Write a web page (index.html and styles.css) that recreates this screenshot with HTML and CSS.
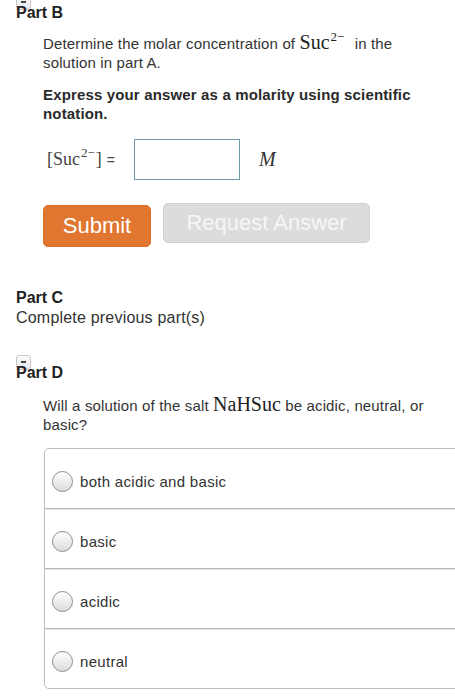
FILE: index.html
```html
<!DOCTYPE html>
<html>
<head>
<meta charset="utf-8">
<link rel="stylesheet" href="styles.css">
</head>
<body>
<main class="page">
  <section class="part">
    <div class="part-head">
      <span class="toggle"></span>
      <h2 class="part-title">Part B</h2>
    </div>
    <div class="part-body">
      <p class="question">Determine the molar concentration of <span class="math">Suc<sup>2−</sup></span> in the solution in part A.</p>
      <p class="instr">Express your answer as a molarity using scientific notation.</p>
      <div class="answer-row">
        <span class="label"><span class="math">[Suc<sup>2−</sup>]</span> <span class="eq">=</span></span>
        <input class="answer-input" type="text">
        <span class="unit">M</span>
      </div>
      <div class="buttons">
        <button class="btn btn-submit">Submit</button>
        <button class="btn btn-request">Request Answer</button>
      </div>
    </div>
  </section>

  <section class="part part-c">
    <h2 class="part-title">Part C</h2>
    <p class="locked">Complete previous part(s)</p>
  </section>

  <section class="part part-d">
    <div class="part-head">
      <span class="toggle"></span>
      <h2 class="part-title">Part D</h2>
    </div>
    <div class="part-body">
      <p class="question">Will a solution of the salt <span class="math">NaHSuc</span> be acidic, neutral, or basic?</p>
      <ul class="choices">
        <li class="choice"><span class="radio"></span><span>both acidic and basic</span></li>
        <li class="choice"><span class="radio"></span><span>basic</span></li>
        <li class="choice"><span class="radio"></span><span>acidic</span></li>
        <li class="choice"><span class="radio"></span><span>neutral</span></li>
      </ul>
    </div>
  </section>
</main>
</body>
</html>
```

FILE: styles.css
```css
html, body {
  margin: 0;
  padding: 0;
  background: #fff;
  overflow: hidden;
}
body {
  font-family: "Liberation Sans", Arial, sans-serif;
  color: #333;
  width: 455px;
}
.page {
  padding-top: 3px;
}
.part-head {
  position: relative;
}
.toggle {
  position: absolute;
  left: 16px;
  top: -8px;
  width: 13px;
  height: 13px;
  border: 1px solid #c9c9c9;
  border-radius: 3px;
  background: linear-gradient(#fafafa, #e8e8e8);
}
.toggle::after {
  content: "";
  position: absolute;
  left: 4px;
  top: 5px;
  width: 5px;
  height: 2px;
  background: #444;
}
.part-title {
  position: relative;
  margin: 0;
  padding-left: 16px;
  font-size: 16px;
  line-height: 20px;
  font-weight: bold;
  color: #222;
}
.part-body {
  padding-left: 43px;
}
.question, .instr {
  margin: 11px 0 0;
  font-size: 15px;
  line-height: 19px;
  letter-spacing: 0.15px;
  padding-right: 14px;
}
.instr {
  margin-top: 13px;
  font-weight: bold;
  letter-spacing: 0.15px;
  color: #2a2a2a;
}
.math {
  font-family: "Liberation Serif", "Times New Roman", serif;
  font-size: 20px;
  line-height: 16px;
  letter-spacing: 0;
  color: #222;
}
.math sup {
  font-size: 13px;
  line-height: 0;
  vertical-align: 8px;
  margin-left: 1px;
  margin-right: 6px;
}
.label .math sup {
  margin-right: 1px;
}
.answer-row {
  display: flex;
  align-items: center;
  margin-top: 16px;
  padding-left: 4px;
}
.label {
  font-size: 14px;
  display: inline-flex;
  align-items: baseline;
}
.label .math {
  font-size: 18px;
  color: #444;
}
.eq {
  margin-left: 5px;
  color: #444;
}
.answer-input {
  box-sizing: border-box;
  width: 106px;
  height: 41px;
  margin: 0 0 0 19px;
  border: 1px solid #6f98ab;
  border-radius: 0;
  padding: 0;
  background: #fff;
  outline: none;
}
.unit {
  margin-left: 19px;
  font-family: "Liberation Serif", "Times New Roman", serif;
  font-style: italic;
  font-size: 20px;
  color: #333;
}
.buttons {
  display: flex;
  align-items: flex-start;
  gap: 12px;
  margin-top: 23px;
}
.btn {
  box-sizing: border-box;
  font-family: "Liberation Sans", Arial, sans-serif;
  font-size: 22px;
  border-radius: 5px;
  padding: 0;
  cursor: pointer;
}
.btn-submit {
  margin-top: 2px;
  width: 108px;
  height: 42px;
  background: #e0762f;
  border: 1px solid #d96d23;
  color: #fff;
}
.btn-request {
  width: 207px;
  height: 40px;
  background: #dcdcdc;
  border: 1px solid #d0d0d0;
  color: #f6f6f6;
}
.part-c {
  margin-top: 41px;
}
.locked {
  margin: 0;
  padding-left: 16px;
  font-size: 16px;
  line-height: 20px;
  letter-spacing: 0.2px;
  color: #333;
}
.part-d {
  margin-top: 35px;
}
.part-d .question {
  margin-top: 13px;
}
.choices {
  list-style: none;
  margin: 14px -12px 0 1px;
  padding: 0;
  border: 1px solid #bdbdbd;
  border-radius: 5px 0 0 5px;
}
.choice {
  display: flex;
  align-items: center;
  height: 59px;
  box-sizing: border-box;
  padding: 6px 0 0 7px;
  font-size: 15px;
  letter-spacing: 0.3px;
  color: #333;
}
.choice + .choice {
  height: 60px;
  border-top: 1px solid #b9b9b9;
  box-shadow: inset 0 1px 0 #e2e2e2;
}
.radio {
  box-sizing: border-box;
  width: 21px;
  height: 21px;
  border: 1px solid #8c8c8c;
  border-radius: 50%;
  background: linear-gradient(#ffffff, #dcdcdc);
  margin-right: 7px;
  flex: none;
}
```
